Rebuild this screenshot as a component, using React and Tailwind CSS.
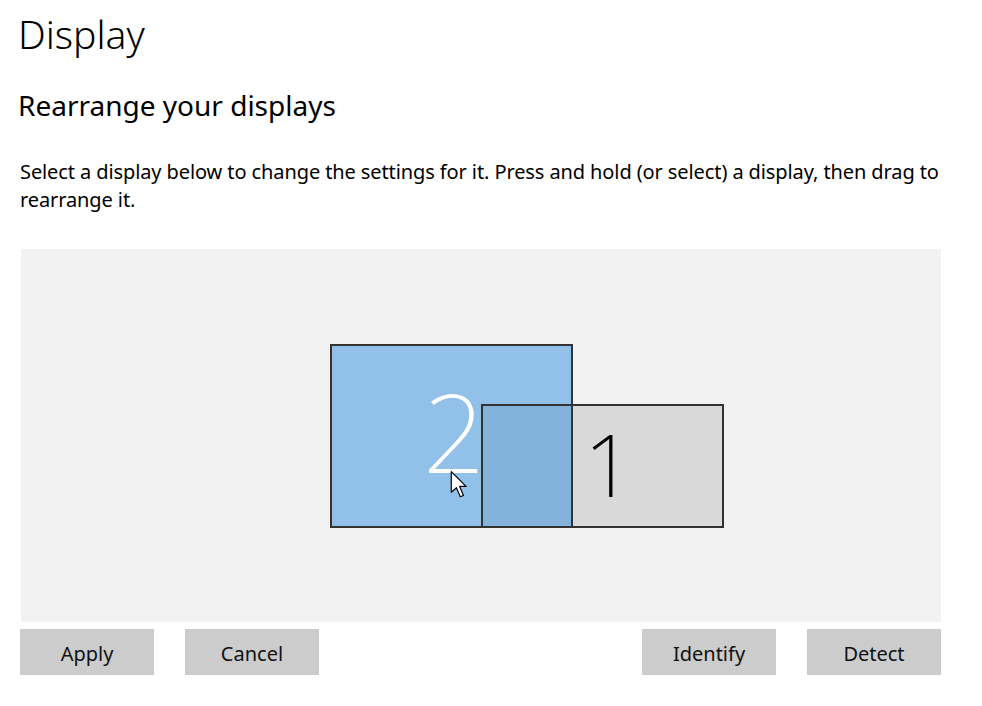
import React from 'react';

const font = { fontFamily: '"Noto Sans", "Open Sans", sans-serif' };

const Cursor = () => (
  <svg width="18" height="29" viewBox="0 0 14 22" className="absolute left-[120px] top-[126px]">
    <path d="M1 1 L1 17 L5 13.5 L8 20.5 L10.5 19.5 L7.5 12.5 L12.5 12.5 Z" fill="#fff" stroke="#000" strokeWidth="0.9" strokeLinejoin="round" />
  </svg>
);

const Monitors = () => (
  <div className="relative w-[394px] h-[184px]">
    <div className="absolute left-0 top-0 w-[243px] h-[184px] bg-[#91c0e8] border-2 border-[#333]" />
    <div className="absolute left-[93px] top-[32px] text-[109px] leading-none font-extralight text-white select-none">2</div>
    <div className="absolute left-[151px] top-[60px] w-[243px] h-[124px] bg-[#d9d9d9] border-2 border-[#333]" />
    <div className="absolute left-[153px] top-[62px] w-[88px] h-[120px] bg-[#83b2da]" />
    <div className="absolute left-[241px] top-[60px] w-[2px] h-[124px] bg-[#333]" />
    <div className="absolute left-[254px] top-[76px] text-[87px] leading-none font-extralight text-black select-none">1</div>
    <Cursor />
  </div>
);

const Btn = ({ children }) => (
  <button className="w-[134px] h-[46px] pt-[3px] bg-[#cccccc] text-[20px] text-[#111] flex items-center justify-center">
    {children}
  </button>
);

export default function App() {
  return (
    <div className="w-[982px] h-[706px] bg-white text-black overflow-hidden" style={font}>
      <div className="pl-[18px] pt-[8px]">
        <h1 className="text-[39px] font-light leading-[52px]">Display</h1>
        <h2 className="mt-[26px] text-[28px] leading-[38px]">Rearrange your displays</h2>
        <p className="mt-[34px] pl-[2px] w-[940px] text-[20px] leading-[28px] tracking-[-0.1px]">
          Select a display below to change the settings for it. Press and hold (or select) a display, then drag to rearrange it.
        </p>
      </div>
      <div className="ml-[21px] mt-[35px] w-[920px] h-[373px] bg-[#f2f2f2] pl-[309px] pt-[95px]">
        <Monitors />
      </div>
      <div className="mt-[7px] ml-[20px] w-[921px] flex items-center gap-[31px]">
        <Btn>Apply</Btn>
        <Btn>Cancel</Btn>
        <div className="flex-1" />
        <Btn>Identify</Btn>
        <Btn>Detect</Btn>
      </div>
    </div>
  );
}
